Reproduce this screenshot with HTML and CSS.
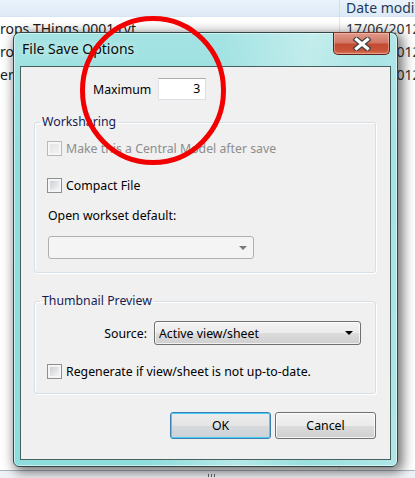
FILE: index.html
```html
<!DOCTYPE html>
<html>
<head>
<meta charset="utf-8">
<link rel="stylesheet" href="styles.css">
</head>
<body>
<div class="explorer">
  <div class="hdr"><div class="col-name"></div><div class="col-date">Date modified</div></div>
  <div class="row"><div class="col-name">rops THings 0001.rvt</div><div class="col-date">17/06/2012</div></div>
  <div class="row"><div class="col-name">rops THings 0002.rvt</div><div class="col-date">17/06/2012</div></div>
  <div class="row"><div class="col-name">er</div><div class="col-date">17/06/2012</div></div>
  <div class="fill"></div>
  <div class="status"><span class="grip"></span></div>
</div>

<div class="dialog">
  <div class="titlebar">
    <span class="title">File Save Options</span>
    <div class="close">
      <svg width="20" height="14" viewBox="0 0 20 14">
        <path d="M4.5 2.5 L15.5 11.5 M15.5 2.5 L4.5 11.5" stroke="#3f3f3f" stroke-width="5.5" stroke-linecap="square" fill="none"/>
        <path d="M4.5 2.5 L15.5 11.5 M15.5 2.5 L4.5 11.5" stroke="#ffffff" stroke-width="3.2" stroke-linecap="square" fill="none"/>
      </svg>
    </div>
  </div>
  <div class="client">
    <div class="max-row">
      <span class="max-label">Maximum</span>
      <div class="num">3</div>
    </div>

    <fieldset class="group g1">
      <legend>Worksharing</legend>
      <div class="check disabled first"><span class="box"></span><span>Make this a Central Model after save</span></div>
      <div class="check second"><span class="box"></span><span>Compact File</span></div>
      <div class="lbl">Open workset default:</div>
      <div class="combo off"><span class="arrow"></span></div>
    </fieldset>

    <fieldset class="group g2">
      <legend>Thumbnail Preview</legend>
      <div class="source-row">
        <span>Source:</span>
        <div class="combo src"><span class="val">Active view/sheet</span><span class="arrow"></span></div>
      </div>
      <div class="check regen"><span class="box"></span><span>Regenerate if view/sheet is not up-to-date.</span></div>
    </fieldset>

    <div class="buttons">
      <div class="btn default">OK</div>
      <div class="btn">Cancel</div>
    </div>
  </div>
</div>

<svg class="circle" width="415" height="478" viewBox="0 0 415 478">
  <ellipse cx="153" cy="90.5" rx="70.5" ry="72" fill="none" stroke="#f20000" stroke-width="5"/>
</svg>
</body>
</html>
```

FILE: styles.css
```css
html, body {
  margin: 0;
  padding: 0;
}
body {
  width: 415px;
  height: 478px;
  overflow: hidden;
  position: relative;
  background: #ffffff;
  font-family: "Noto Sans", "Open Sans", sans-serif;
  font-size: 12.3px;
  color: #000;
}

/* ---------- background explorer ---------- */
.explorer {
  display: flex;
  flex-direction: column;
  height: 478px;
}
.hdr {
  display: flex;
  height: 16px;
  border-bottom: 1px solid #d5e5f3;
  background: linear-gradient(#eaf3fb, #dde9f6);
  color: #1e395b;
  line-height: 16px;
  font-size: 14px;
}
.row {
  display: flex;
  height: 23px;
  line-height: 23px;
  font-size: 14px;
  color: #1a1a1a;
}
.col-name {
  width: 339px;
  flex: none;
  border-right: 1px solid #c9dff2;
  white-space: nowrap;
  overflow: hidden;
}
.row .col-name { border-right-color: #e6e6e6; }
.col-date {
  padding-left: 6px;
  white-space: nowrap;
  overflow: hidden;
}
.row .col-date { color: #333; }
.fill { flex: 1; display: flex; }
.fill::before {
  content: "";
  width: 339px;
  border-right: 1px solid #e6e6e6;
}
.status {
  height: 7px;
  border-top: 1px solid #a9b4bf;
  background: #eef1f5;
  display: flex;
  justify-content: center;
}
.grip {
  width: 7px;
  height: 3px;
  margin-top: 3px;
  margin-left: 8px;
  background: repeating-linear-gradient(90deg, #6a6a6a 0 1px, transparent 1px 3px);
}

/* ---------- dialog ---------- */
.dialog {
  position: absolute;
  left: 13px;
  top: 32px;
  width: 385px;
  height: 435px;
  box-sizing: border-box;
  border: 1px solid #2f4747;
  border-radius: 7px 7px 6px 6px;
  padding: 0 6px 6px 6px;
  display: flex;
  flex-direction: column;
  background:
    linear-gradient(100deg, rgba(255,255,255,0) 0%, rgba(255,255,255,0) 45%, rgba(255,255,255,0.35) 65%, rgba(255,255,255,0.1) 80%, rgba(255,255,255,0.3) 100%),
    linear-gradient(#a5e3e3, #8fdede 30%, #8ddddc);
  box-shadow: 3px 3px 12px 2px rgba(0,0,0,0.55), inset 0 0 0 1px rgba(255,255,255,0.55);
}
.titlebar {
  height: 33px;
  display: flex;
  align-items: flex-start;
}
.title {
  flex: 1;
  padding-left: 2px;
  line-height: 31px;
  font-size: 14px;
  color: #0a0a0a;
  text-shadow: 0 0 8px rgba(255,255,255,0.9);
}
.close {
  width: 57px;
  height: 23px;
  margin-top: -1px;
  margin-right: 1px;
  box-sizing: border-box;
  border: 1px solid #5b2216;
  border-top-color: #7a3a2e;
  border-radius: 0 0 5px 5px;
  background: linear-gradient(#df9a8a 0%, #d27766 45%, #c24a30 55%, #c9553a 85%, #d77c60 100%);
  box-shadow: inset 0 0 0 1px rgba(255,210,200,0.45);
  display: flex;
  align-items: center;
  justify-content: center;
}
.close svg { display: block; }

.client {
  flex: 1;
  border: 1px solid #46605f;
  background: #f0f0f0;
  display: flex;
  flex-direction: column;
}

.max-row {
  display: flex;
  align-items: center;
  gap: 7px;
  margin-top: 11px;
  padding-left: 72px;
  height: 22px;
}
.num {
  width: 48px;
  height: 22px;
  box-sizing: border-box;
  border: 1px solid #dbdfe6;
  border-top-color: #abadb3;
  border-left-color: #e2e3ea;
  background: #fff;
  text-align: right;
  padding-right: 5px;
  line-height: 20px;
}

.group {
  margin: 0 14px 0 13px;
  padding: 0 13px 13px 12px;
  border: 1px solid #d5dfe5;
  border-radius: 3px;
  box-shadow: inset 1px 1px 0 #fff, 1px 1px 0 #fff;
  min-width: 0;
}
.group legend {
  padding: 0 2px;
  margin-left: -7px;
  line-height: 16px;
  color: #151c55;
}
.g1 { margin-top: 14px; }
.g2 { margin-top: 20px; padding-bottom: 14px; }

.check {
  display: flex;
  align-items: center;
  gap: 4px;
  height: 15px;
  line-height: 15px;
}
.check.first { margin-top: 11px; }
.check.second { margin-top: 22px; }
.check.regen { margin-top: 19px; }
.box {
  width: 15px;
  height: 15px;
  flex: none;
  box-sizing: border-box;
  border: 1px solid #8e8f8f;
  background: linear-gradient(135deg, #c3c7cd, #eef0f2 75%, #f7f7f7);
  box-shadow: inset 0 0 0 2px #f5f5f5;
}
.check.disabled { color: #8d8d8d; }
.check.disabled .box {
  border-color: #b9b9b9;
  background: linear-gradient(135deg, #e2e2e2, #f4f4f4);
  box-shadow: inset 0 0 0 2px #f6f6f6;
}

.lbl {
  margin-top: 15px;
  padding-left: 1px;
  line-height: 16px;
}
.combo {
  box-sizing: border-box;
  border-radius: 3px;
  display: flex;
  align-items: center;
}
.combo.off {
  margin-top: 12px;
  margin-left: 1px;
  width: 206px;
  height: 23px;
  border: 1px solid #adb2b5;
  background: #f4f4f4;
  justify-content: flex-end;
  padding-right: 6px;
}
.arrow {
  width: 0;
  height: 0;
  border-left: 4px solid transparent;
  border-right: 4px solid transparent;
  border-top: 4px solid #000;
}
.combo.off .arrow { border-top-color: #7a7a7a; }

.source-row {
  margin-top: 12px;
  display: flex;
  align-items: center;
  justify-content: flex-end;
  gap: 7px;
  padding-right: 1px;
}
.combo.src {
  width: 207px;
  height: 24px;
  border: 1px solid #707070;
  background: linear-gradient(#f3f3f3 0%, #ebebeb 50%, #dddddd 50%, #cfcfcf 100%);
  box-shadow: inset 0 0 0 1px rgba(255,255,255,0.7);
  padding: 0 7px 0 4px;
  justify-content: space-between;
}

.buttons {
  margin-top: 18px;
  margin-right: 14px;
  display: flex;
  justify-content: flex-end;
  gap: 4px;
}
.btn {
  width: 101px;
  height: 27px;
  box-sizing: border-box;
  border: 1px solid #707070;
  border-radius: 3px;
  background: linear-gradient(#f2f2f2 0%, #ebebeb 50%, #dddddd 50%, #cfcfcf 100%);
  box-shadow: inset 0 0 0 1px rgba(255,255,255,0.75);
  text-align: center;
  line-height: 25px;
  color: #000;
}
.btn.default {
  border-color: #3c7fb1;
  background: linear-gradient(#ececec 0%, #e4e4e4 50%, #d6dadd 50%, #cdd2d6 100%);
  box-shadow: inset 0 0 0 1px #48cdf9;
}

.circle {
  position: absolute;
  left: 0;
  top: 0;
  pointer-events: none;
}
```
